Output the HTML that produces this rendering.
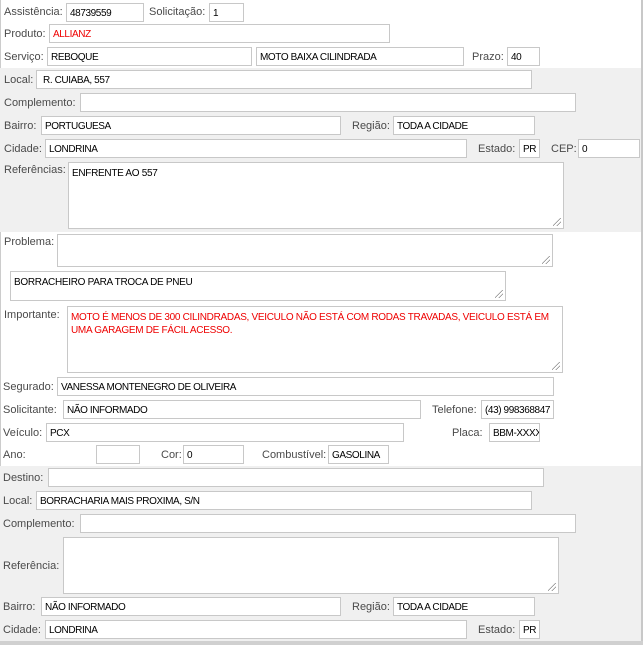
<!DOCTYPE html>
<html><head><meta charset="utf-8"><style>
*{box-sizing:border-box;margin:0;padding:0}
body{width:643px;height:645px;position:relative;background:#fff;font-family:"Liberation Sans",sans-serif;overflow:hidden}
.g{position:absolute;left:0;width:641px;background:#f0f0f0}
.l{position:absolute;font-size:11px;color:#4a4a4a;line-height:14px;white-space:nowrap}
.i{position:absolute;height:19px;border:1px solid #c8c8c8;background:#fff;font-size:10px;color:#000;padding:4px 3px 0;line-height:12px;white-space:nowrap;overflow:hidden;letter-spacing:-0.4px}
.t{position:absolute;border:1px solid #c8c8c8;background:#fff;font-size:10px;color:#000;padding:4px 3px;line-height:13px;letter-spacing:-0.3px}
.t::after{content:"";position:absolute;right:2px;bottom:2px;width:8px;height:8px;background:linear-gradient(135deg,transparent 45%,#888 45%,#888 52%,transparent 52%,transparent 70%,#888 70%,#888 77%,transparent 77%)}
.r{color:#e00}
</style></head><body>
<div style="position:absolute;left:0;top:0;width:1px;height:645px;background:#ccc"></div>
<div style="position:absolute;left:641px;top:0;width:2px;height:645px;background:#c8c8c8"></div>
<div class="g" style="top:68px;height:164px"></div>
<div class="g" style="top:466px;height:175px"></div>
<div style="position:absolute;left:0;top:641px;width:643px;height:4px;background:#d0d0d0"></div>

<div class="l" style="left:4px;top:5px">Assistência:</div><div class="i" style="left:66px;top:3px;width:78px">48739559</div>
<div class="l" style="left:149px;top:5px">Solicitação:</div><div class="i" style="left:209px;top:3px;width:35px">1</div>
<div class="l" style="left:4px;top:27px">Produto:</div><div class="i r" style="left:49px;top:24px;width:341px">ALLIANZ</div>
<div class="l" style="left:4px;top:50px">Serviço:</div><div class="i" style="left:47px;top:47px;width:205px">REBOQUE</div>
<div class="i" style="left:256px;top:47px;width:208px">MOTO BAIXA CILINDRADA</div>
<div class="l" style="left:472px;top:50px">Prazo:</div><div class="i" style="left:507px;top:47px;width:33px">40</div>

<div class="l" style="left:4px;top:73px">Local:</div><div class="i" style="left:36px;top:70px;width:496px;padding-left:6px">R. CUIABA, 557</div>
<div class="l" style="left:4px;top:96px">Complemento:</div><div class="i" style="left:80px;top:93px;width:496px"></div>
<div class="l" style="left:4px;top:119px">Bairro:</div><div class="i" style="left:41px;top:116px;width:300px">PORTUGUESA</div>
<div class="l" style="left:352px;top:119px">Região:</div><div class="i" style="left:393px;top:116px;width:142px">TODA A CIDADE</div>
<div class="l" style="left:4px;top:142px">Cidade:</div><div class="i" style="left:45px;top:139px;width:422px">LONDRINA</div>
<div class="l" style="left:478px;top:142px">Estado:</div><div class="i" style="left:519px;top:139px;width:21px">PR</div>
<div class="l" style="left:551px;top:142px">CEP:</div><div class="i" style="left:578px;top:139px;width:62px">0</div>
<div class="l" style="left:4px;top:163px">Referências:</div><div class="t" style="left:68px;top:162px;width:496px;height:67px">ENFRENTE AO 557</div>

<div class="l" style="left:4px;top:235px">Problema:</div><div class="t" style="left:57px;top:234px;width:496px;height:33px"></div>
<div class="t" style="left:10px;top:271px;width:496px;height:30px">BORRACHEIRO PARA TROCA DE PNEU</div>
<div class="l" style="left:4px;top:308px">Importante:</div><div class="t r" style="left:67px;top:306px;width:496px;height:67px">MOTO É MENOS DE 300 CILINDRADAS, VEICULO NÃO ESTÁ COM RODAS TRAVADAS, VEICULO ESTÁ EM UMA GARAGEM DE FÁCIL ACESSO.</div>

<div class="l" style="left:3px;top:380px">Segurado:</div><div class="i" style="left:57px;top:377px;width:497px">VANESSA MONTENEGRO DE OLIVEIRA</div>
<div class="l" style="left:3px;top:403px">Solicitante:</div><div class="i" style="left:63px;top:400px;width:358px">NÃO INFORMADO</div>
<div class="l" style="left:432px;top:403px">Telefone:</div><div class="i" style="left:481px;top:400px;width:73px">(43) 998368847</div>
<div class="l" style="left:3px;top:426px">Veículo:</div><div class="i" style="left:46px;top:423px;width:358px">PCX</div>
<div class="l" style="left:452px;top:426px">Placa:</div><div class="i" style="left:489px;top:423px;width:51px">BBM-XXXX</div>
<div class="l" style="left:3px;top:448px">Ano:</div><div class="i" style="left:96px;top:445px;width:44px"></div>
<div class="l" style="left:161px;top:448px">Cor:</div><div class="i" style="left:183px;top:445px;width:61px">0</div>
<div class="l" style="left:262px;top:448px">Combustível:</div><div class="i" style="left:328px;top:445px;width:61px">GASOLINA</div>

<div class="l" style="left:3px;top:471px">Destino:</div><div class="i" style="left:48px;top:468px;width:496px"></div>
<div class="l" style="left:3px;top:494px">Local:</div><div class="i" style="left:36px;top:491px;width:496px">BORRACHARIA MAIS PROXIMA, S/N</div>
<div class="l" style="left:3px;top:517px">Complemento:</div><div class="i" style="left:80px;top:514px;width:496px"></div>
<div class="l" style="left:3px;top:559px">Referência:</div><div class="t" style="left:63px;top:537px;width:496px;height:57px"></div>
<div class="l" style="left:3px;top:600px">Bairro:</div><div class="i" style="left:41px;top:597px;width:300px">NÃO INFORMADO</div>
<div class="l" style="left:352px;top:600px">Região:</div><div class="i" style="left:393px;top:597px;width:142px">TODA A CIDADE</div>
<div class="l" style="left:3px;top:623px">Cidade:</div><div class="i" style="left:45px;top:620px;width:422px">LONDRINA</div>
<div class="l" style="left:478px;top:623px">Estado:</div><div class="i" style="left:519px;top:620px;width:21px">PR</div>
</body></html>
